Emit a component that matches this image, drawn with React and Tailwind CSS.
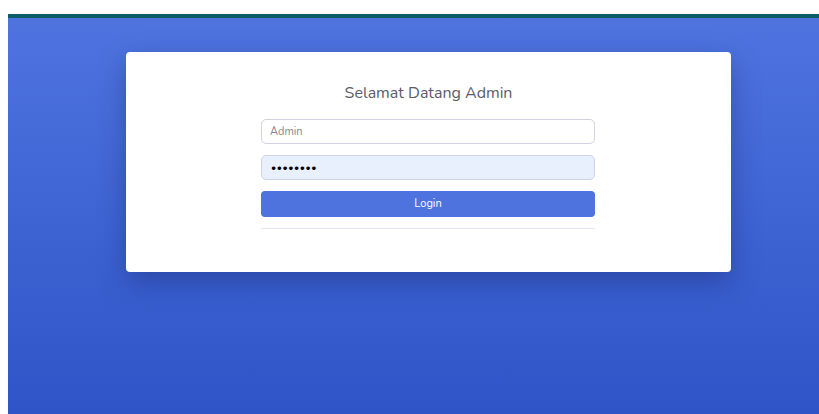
export default function App() {
  return (
    <div className="h-[414px] w-[819px] overflow-hidden bg-white pt-[14px] pl-[8px] font-['Nunito','Open_Sans',sans-serif]">
      <div className="h-[4px] bg-[#0b5d66]" />
      <div className="h-[396px] bg-gradient-to-b from-[#4f74e0] to-[#2e54c7] pt-[34px]">
        <div className="ml-[118px] w-[605px] rounded-[4px] bg-white shadow-[0_10px_28px_rgba(20,30,90,0.35)] pt-[30px] pb-[43px]">
          <h1 className="text-center text-[16px] leading-[22px] text-[#5a5c69]">Selamat Datang Admin</h1>
          <div className="ml-[135px] mt-[15px] w-[334px]">
            <input
              type="text"
              placeholder="Admin"
              className="block h-[25px] w-full rounded-[5px] border border-[#d1d3e2] bg-white px-[8px] text-[11px] text-[#6e707e] outline-none placeholder:text-[#858796]"
            />
            <input
              type="password"
              defaultValue="password"
              className="mt-[11px] block h-[25px] w-full rounded-[5px] border border-[#d1d3e2] bg-[#e8f0fe] px-[9px] text-[10px] tracking-[0.5px] text-black outline-none"
            />
            <button className="mt-[11px] block h-[26px] w-full rounded-[4px] bg-[#4e73df] text-[11px] text-white">
              Login
            </button>
            <hr className="mt-[11px] border-t border-[#e3e6f0]" />
          </div>
        </div>
      </div>
    </div>
  );
}
